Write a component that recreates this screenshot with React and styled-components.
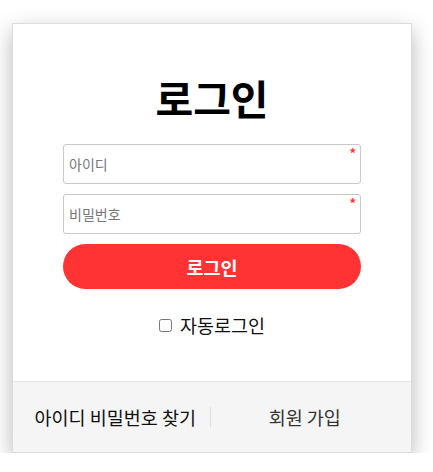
import React from "react";
import styled, { createGlobalStyle } from "styled-components";

const Global = createGlobalStyle`
  html, body { margin: 0; padding: 0; background: #fff; }
  body { font-family: "Noto Sans CJK KR", "Noto Sans", sans-serif; }
  * { box-sizing: border-box; }
`;

const Page = styled.div`
  padding: 23px 0 0 12px;
`;

const Card = styled.div`
  width: 400px;
  border: 1px solid #dcdcdc;
  background: #fff;
  box-shadow: 0 7px 20px rgba(0, 0, 0, 0.28);
`;

const Body = styled.form`
  padding: 45px 50px 44px;
  display: flex;
  flex-direction: column;
`;

const Title = styled.h1`
  margin: 0 0 18px;
  font-size: 41px;
  line-height: 57px;
  font-weight: 700;
  text-align: center;
  color: #000;
`;

const Field = styled.div`
  position: relative;
  margin-top: ${(p) => (p.$first ? 0 : 10)}px;
`;

const Input = styled.input`
  display: block;
  width: 100%;
  height: 40px;
  border: 1px solid #c8c8c8;
  border-radius: 3px;
  padding: 0 5px;
  font-family: inherit;
  font-size: 14px;
  color: #333;
  outline: none;
  &::placeholder { color: #777; }
`;

const Required = styled.span`
  position: absolute;
  top: 2px;
  right: 5px;
  color: #ff3333;
  font-size: 13px;
  line-height: 13px;
  font-weight: 700;
`;

const Button = styled.button`
  margin-top: 10px;
  height: 45px;
  border: none;
  border-radius: 23px;
  background: #ff3333;
  color: #fff;
  font-family: inherit;
  font-size: 18.5px;
  font-weight: 700;
  cursor: pointer;
`;

const AutoRow = styled.label`
  margin-top: 24px;
  display: flex;
  justify-content: center;
  align-items: center;
  gap: 8px;
  font-size: 18.5px;
  line-height: 24px;
  color: #111;
`;

const Check = styled.input`
  margin: 0;
  width: 13px;
  height: 13px;
`;

const Footer = styled.div`
  height: 71px;
  border-top: 1px solid #e4e4e4;
  background: #f5f5f5;
  display: flex;
  align-items: center;
`;

const FooterLink = styled.a`
  flex: 1;
  text-align: center;
  font-size: 18.5px;
  color: ${(p) => (p.$muted ? "#333" : "#111")};
  text-decoration: none;
  padding-left: ${(p) => (p.$muted ? 0 : 8)}px;
  padding-right: ${(p) => (p.$muted ? 12 : 0)}px;
`;

const Divider = styled.span`
  width: 1px;
  height: 20px;
  background: #dddddd;
`;

export default function App() {
  return (
    <Page>
      <Global />
      <Card>
        <Body onSubmit={(e) => e.preventDefault()}>
          <Title>로그인</Title>
          <Field $first>
            <Input placeholder="아이디" />
            <Required>*</Required>
          </Field>
          <Field>
            <Input type="password" placeholder="비밀번호" />
            <Required>*</Required>
          </Field>
          <Button type="submit">로그인</Button>
          <AutoRow>
            <Check type="checkbox" />
            자동로그인
          </AutoRow>
        </Body>
        <Footer>
          <FooterLink href="#">아이디 비밀번호 찾기</FooterLink>
          <Divider />
          <FooterLink href="#" $muted>회원 가입</FooterLink>
        </Footer>
      </Card>
    </Page>
  );
}
